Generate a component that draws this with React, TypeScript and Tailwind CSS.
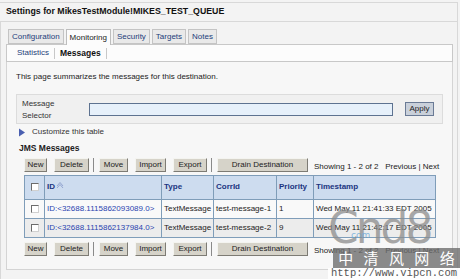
import React from "react";

const tabs = ["Configuration", "Monitoring", "Security", "Targets", "Notes"];

const rows = [
  { id: "ID:<32688.1115862093089.0>", corr: "test-message-1", prio: "1", ts: "Wed May 11 21:41:33 EDT 2005" },
  { id: "ID:<32688.1115862137984.0>", corr: "test-message-2", prio: "9", ts: "Wed May 11 21:42:17 EDT 2005" },
];

function Btn({ children, w }: { children: React.ReactNode; w: string }) {
  return (
    <div
      className={`${w} h-[14px] flex items-center justify-center bg-[#d6d3c9] border border-t-[#f4f4f0] border-l-[#f4f4f0] border-r-[#7d7b74] border-b-[#7d7b74] text-[8px] text-[#222]`}
    >
      {children}
    </div>
  );
}

function Sep() {
  return <div className="mx-[4px] w-[2px] h-[14px] border-l border-[#8a8a8a] border-r-white" />;
}

function Check() {
  return <div className="w-[8px] h-[8px] bg-white border border-t-[#6b6b6b] border-l-[#6b6b6b] border-r-[#d0d0d0] border-b-[#d0d0d0]" />;
}

function ButtonRow() {
  return (
    <div className="flex items-end h-[14px]">
      <div className="flex items-center">
        <Btn w="w-[23px]">New</Btn>
        <div className="w-[7px]" />
        <Btn w="w-[35px]">Delete</Btn>
        <Sep />
        <Btn w="w-[29px]">Move</Btn>
        <div className="w-[7px]" />
        <Btn w="w-[31px]">Import</Btn>
        <div className="w-[7px]" />
        <Btn w="w-[34px]">Export</Btn>
        <Sep />
        <Btn w="w-[91px]">Drain Destination</Btn>
      </div>
      <div className="mb-[-1px] ml-[6px] text-[8px] text-[#222] whitespace-nowrap">
        Showing 1 - 2 of 2&nbsp;&nbsp; Previous | Next
      </div>
    </div>
  );
}

export default function App() {
  return (
    <div className="w-[460px] h-[279px] overflow-hidden relative bg-[#f3f3f3] font-['Liberation_Sans',Arial,sans-serif] text-[8px] text-black">
      {/* title */}
      <div className="mt-[2px] mr-[2px] h-[20px] border-t border-b border-r border-[#d8d8d8] flex items-center pl-[6px]">
        <span className="font-bold text-[8.8px] text-[#111]">Settings for MikesTestModule!MIKES_TEST_QUEUE</span>
      </div>

      <div className="mr-[2px] border-r border-l border-[#d8d8d8] h-[257px] pl-[5px] pr-[4px]">
        {/* tabs */}
        <div className="flex items-end gap-[2px] pt-[6px] pl-[2px]">
          {tabs.map((t) => {
            const active = t === "Monitoring";
            return (
              <div
                key={t}
                className={
                  active
                    ? "h-[16px] px-[3px] flex items-center bg-[#fcfcfc] border border-b-0 border-[#bdbdbd] text-[#222] relative top-[1px]"
                    : "h-[15px] px-[3px] flex items-center bg-[#e9e9e9] border border-[#c4c4c4] text-[#1d3d7a]"
                }
              >
                {t}
              </div>
            );
          })}
        </div>

        {/* subtabs */}
        <div className="h-[18px] bg-[#fcfcfc] border border-[#c8c8c8] flex items-center pl-[10px]">
          <span className="text-[#1d3d7a]">Statistics</span>
          <span className="mx-[5px] h-[11px] border-l border-[#c8c8c8]" />
          <span className="font-bold text-[8.5px] text-[#111]">Messages</span>
          <span className="ml-[5px] h-[11px] border-l border-[#c8c8c8]" />
        </div>

        {/* content */}
        <div className="h-[208px] border-l border-r border-b border-[#d4d4d4] bg-[#f7f7f7] pl-[9px] pr-[9px]">
          <div className="pt-[9px] text-[#222]">This page summarizes the messages for this destination.</div>

          <div className="mt-[11px] h-[30px] border border-[#dcdcdc] bg-[#f0f0f0] flex items-center pl-[5px] pr-[8px]">
            <div className="w-[67px] leading-[12px] text-[#333] pt-[1px]">
              Message
              <br />
              Selector
            </div>
            <div className="w-[304px] h-[13px] bg-[#e6f0fa] border border-[#5d7290]" />
            <div className="ml-[12px] w-[29px] h-[14px] flex items-center justify-center bg-[#c9d0da] border border-[#6a7a95] text-[#222]">
              Apply
            </div>
          </div>

          <div className="mt-[2px] flex items-center h-[12px]">
            <svg width="8" height="9" viewBox="0 0 8 9" className="ml-[2px]">
              <path d="M1 0.5 L7 4.5 L1 8.5 Z" fill="#4a5fb0" />
            </svg>
            <span className="ml-[6px] text-[#333]">Customize this table</span>
          </div>

          <div className="mt-[4px] font-bold text-[8.5px] text-[#222] pl-[3px]">JMS Messages</div>

          <div className="pl-[8px] mt-[3px]">
            <ButtonRow />

            <table className="mt-[3px] w-[412px] table-fixed border-collapse border border-[#7f9db9] text-[8px]">
              <colgroup>
                <col className="w-[20px]" />
                <col className="w-[117px]" />
                <col className="w-[52px]" />
                <col className="w-[63px]" />
                <col className="w-[37px]" />
                <col />
              </colgroup>
              <thead>
                <tr className="h-[24px] bg-[#cddcef] text-[#1b3480] font-bold text-left">
                  <th className="border border-[#7f9db9] pl-[6px]"><Check /></th>
                  <th className="border border-[#7f9db9] pl-[2px]">
                    ID
                    <svg width="8" height="7" viewBox="0 0 8 7" className="inline-block ml-[1px] align-baseline">
                      <path d="M1 6 L4 2.5 L7 6 M1 4 L4 0.5 L7 4" fill="none" stroke="#8c9fcc" strokeWidth="0.9" />
                    </svg>
                  </th>
                  <th className="border border-[#7f9db9] pl-[2px]">Type</th>
                  <th className="border border-[#7f9db9] pl-[2px]">CorrId</th>
                  <th className="border border-[#7f9db9] pl-[2px]">Priority</th>
                  <th className="border border-[#7f9db9] pl-[2px]">Timestamp</th>
                </tr>
              </thead>
              <tbody>
                {rows.map((r, i) => (
                  <tr key={r.id} className={`h-[19px] ${i === 1 ? "bg-[#ececec]" : "bg-[#f9f9f9]"} text-[#222]`}>
                    <td className="border border-[#7f9db9] pl-[6px]"><Check /></td>
                    <td className="border border-[#7f9db9] pl-[2px] text-[#2a44b0] whitespace-nowrap">{r.id}</td>
                    <td className="border border-[#7f9db9] pl-[2px]">TextMessage</td>
                    <td className="border border-[#7f9db9] pl-[2px] whitespace-nowrap">{r.corr}</td>
                    <td className="border border-[#7f9db9] pl-[2px]">{r.prio}</td>
                    <td className="border border-[#7f9db9] pl-[2px] whitespace-nowrap">{r.ts}</td>
                  </tr>
                ))}
              </tbody>
            </table>

            <div className="mt-[4px]">
              <ButtonRow />
            </div>
          </div>
        </div>
      </div>

      {/* watermark */}
      <div className="absolute left-[328px] top-[206px] text-[44px] leading-[44px] tracking-[-3px] text-[#8c8c8c]/75 font-['DejaVu_Sans',sans-serif]">
        Cnd8
      </div>
      <div className="absolute left-[351px] top-[229px] text-[9px] text-[#6aa9d8]/80 font-['DejaVu_Sans',sans-serif]">
        com
      </div>
      <div className="absolute left-[333px] top-[248px] w-[127px] h-[20px] bg-[#6e6e6e]/80 flex items-center justify-around text-white text-[15px] font-['Noto_Sans_CJK_SC',sans-serif]">
        <span>中</span><span>清</span><span>风</span><span>网</span><span>络</span>
      </div>
      <div className="absolute left-[328px] top-[268px] w-[132px] h-[11px] bg-white/90 text-[#555] text-[10.5px] leading-[11px] font-['Liberation_Mono',monospace] pl-[3px]">
        http://www.vipcn.com
      </div>
    </div>
  );
}
